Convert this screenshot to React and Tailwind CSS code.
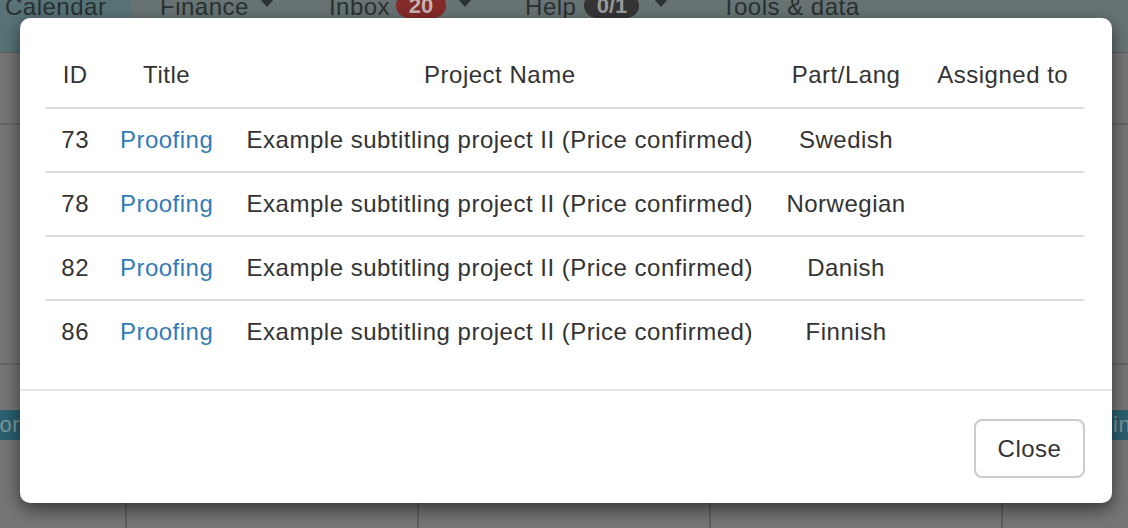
import React from "react";

const rows = [
  { id: 73, lang: "Swedish" },
  { id: 78, lang: "Norwegian" },
  { id: 82, lang: "Danish" },
  { id: 86, lang: "Finnish" },
];

function Caret({ ml }) {
  return (
    <svg width="14" height="8" viewBox="0 0 14 8" className={ml + " mt-[4px] shrink-0"}>
      <path d="M0 0 L14 0 L7 8 Z" fill="#2c3434" />
    </svg>
  );
}

const th = "h-[65px] px-[15px] font-normal text-center align-middle whitespace-nowrap";
const td = "h-[64px] px-[15px] pb-[2px] border-t-2 border-[#dddddd] text-center align-middle whitespace-nowrap";

export default function App() {
  return (
    <div
      className="relative w-[1128px] h-[528px] overflow-hidden bg-[#767676] tracking-[0.5px]"
      style={{ fontFamily: '"Liberation Sans", Arial, Helvetica, sans-serif' }}
    >
      {/* page behind (dimmed by backdrop) */}
      <div className="flex flex-col h-full">
        <div className="h-[53px] flex items-start bg-[#687474] border-b border-[#5a6060] text-[24px] leading-[24px] text-[#2a3131]">
          <div className="w-[131px] h-full pl-[5px] bg-[#587378] shrink-0">
            <span className="block -mt-[5px]">Calendar</span>
          </div>
          <div className="flex items-start ml-[29px] -mt-[5px]">
            <span>Finance</span>
            <Caret ml="ml-[11px]" />
          </div>
          <div className="flex items-start ml-[55px] -mt-[5px]">
            <span>Inbox</span>
            <span className="ml-[6px] -mt-[2px] h-[25px] w-[50px] text-center rounded-full bg-[#852b29] text-[#c8b4b3] font-bold text-[22px] leading-[25px] tracking-normal">20</span>
            <Caret ml="ml-[12px]" />
          </div>
          <div className="flex items-start ml-[53px] -mt-[5px]">
            <span>Help</span>
            <span className="ml-[8px] -mt-[2px] h-[25px] w-[55px] text-center rounded-full bg-[#353535] text-[#9a9a9a] font-bold text-[22px] leading-[25px] tracking-normal">0/1</span>
            <Caret ml="ml-[15px]" />
          </div>
          <div className="ml-[53px] -mt-[5px]">Tools &amp; data</div>
        </div>
        <div className="h-[72px] border-b-2 border-[#666666]" />
        <div className="h-[240px] border-b-2 border-[#666666]" />
        <div className="h-[45px]" />
        <div className="h-[30px] flex justify-between text-[22px] leading-[30px] text-[#7c979d]">
          <div className="w-[40px] pr-[20px] bg-[#2b6070] flex justify-end overflow-hidden">
            <span className="shrink-0">Error</span>
          </div>
          <div className="w-[30px] bg-[#2b6070] overflow-hidden pl-[15px] whitespace-nowrap">
            <span>ing</span>
          </div>
        </div>
        <div className="flex-1 flex">
          <div className="w-[127px] border-r-2 border-[#5e5e5e]" />
          <div className="w-[292px] border-r-2 border-[#5e5e5e]" />
          <div className="w-[292px] border-r-2 border-[#5e5e5e]" />
          <div className="w-[292px] border-r-2 border-[#5e5e5e]" />
          <div className="flex-1" />
        </div>
      </div>

      {/* modal */}
      <div className="absolute left-[20px] top-[18px] w-[1092px] h-[485px] bg-white rounded-[10px] shadow-[0_6px_18px_rgba(0,0,0,0.55)] flex flex-col text-[#333333]">
        <div className="pt-[24px] pl-[26px] pr-[28px] pb-[26px]">
          <table className="w-full border-separate border-spacing-0 text-[24px] leading-[31px]">
            <thead>
              <tr>
                <th className={th}>ID</th>
                <th className={th}>Title</th>
                <th className={th}>Project Name</th>
                <th className={th}>Part/Lang</th>
                <th className={th}>Assigned to</th>
              </tr>
            </thead>
            <tbody>
              {rows.map((r) => (
                <tr key={r.id}>
                  <td className={td}>{r.id}</td>
                  <td className={td}>
                    <a className="text-[#337ab7]" href="#">Proofing</a>
                  </td>
                  <td className={td}>Example subtitling project II (Price confirmed)</td>
                  <td className={td}>{r.lang}</td>
                  <td className={td}></td>
                </tr>
              ))}
            </tbody>
          </table>
        </div>
        <div className="border-t-2 border-[#e5e5e5] pt-[28px] pr-[27px] flex justify-end">
          <button className="w-[111px] h-[59px] border-2 border-[#cccccc] rounded-[8px] bg-white text-[24px] text-[#333333] tracking-[0.5px]">
            Close
          </button>
        </div>
      </div>
    </div>
  );
}
